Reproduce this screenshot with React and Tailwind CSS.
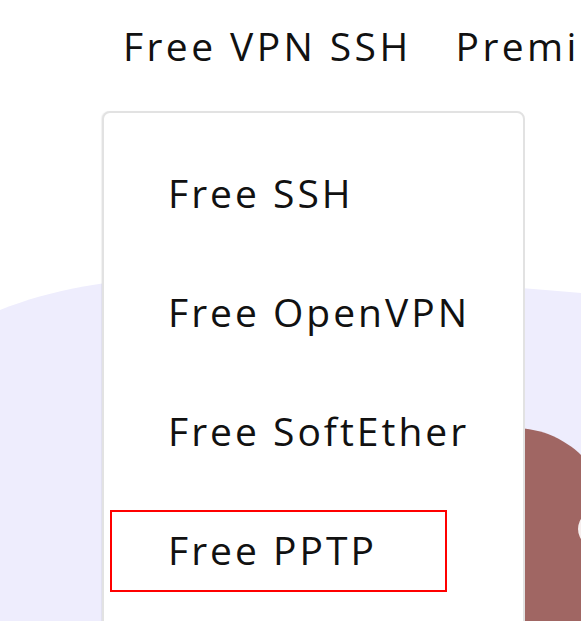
import React from "react";

// Decorative backdrop: lavender wave, brown blob, and a soft highlight
function Backdrop() {
  return (
    <svg
      className="absolute inset-0"
      width="581"
      height="621"
      viewBox="0 0 581 621"
      aria-hidden="true"
    >
      <path
        d="M0 310 C50 290 110 278 200 276 C350 274 480 284 581 293 L581 621 L0 621 Z"
        fill="#eeedfd"
      />
      <path
        d="M420 445 C460 426 515 422 548 434 C563 440 574 448 581 455 L581 621 L420 621 Z"
        fill="#a06663"
      />
      <ellipse cx="601" cy="529" rx="23" ry="20" fill="#f6eeee" />
    </svg>
  );
}

const items = ["Free SSH", "Free OpenVPN", "Free SoftEther", "Free PPTP"];

export default function App() {
  return (
    <div className="relative w-[581px] h-[621px] overflow-hidden bg-white font-['Open_Sans',sans-serif] text-[#111111]">
      <Backdrop />
      <div className="relative">
        <nav className="flex gap-[44px] whitespace-nowrap pl-[123px] pt-[23px] pb-[1px] text-[39px] leading-[45px] tracking-[3.4px]">
          <span>Free VPN SSH</span>
          <span>Premium SSH</span>
        </nav>
        <div className="ml-[102px] mt-[42px] w-[423px] h-[560px] rounded-lg border-2 border-[#e2e2e2] bg-white pt-[40px] pl-[6px] flex flex-col gap-[37px] shadow-[-1px_0_1px_rgba(0,0,0,0.06)]">
          {items.map((label, i) => (
            <div
              key={label}
              className={
                "w-[337px] h-[82px] flex items-center whitespace-nowrap pl-[56px] pb-[4px] text-[39px] leading-none tracking-[3px] " +
                (i === items.length - 1 ? "border-2 border-[#ff0000]" : "border-2 border-transparent")
              }
            >
              {label}
            </div>
          ))}
        </div>
      </div>
    </div>
  );
}
